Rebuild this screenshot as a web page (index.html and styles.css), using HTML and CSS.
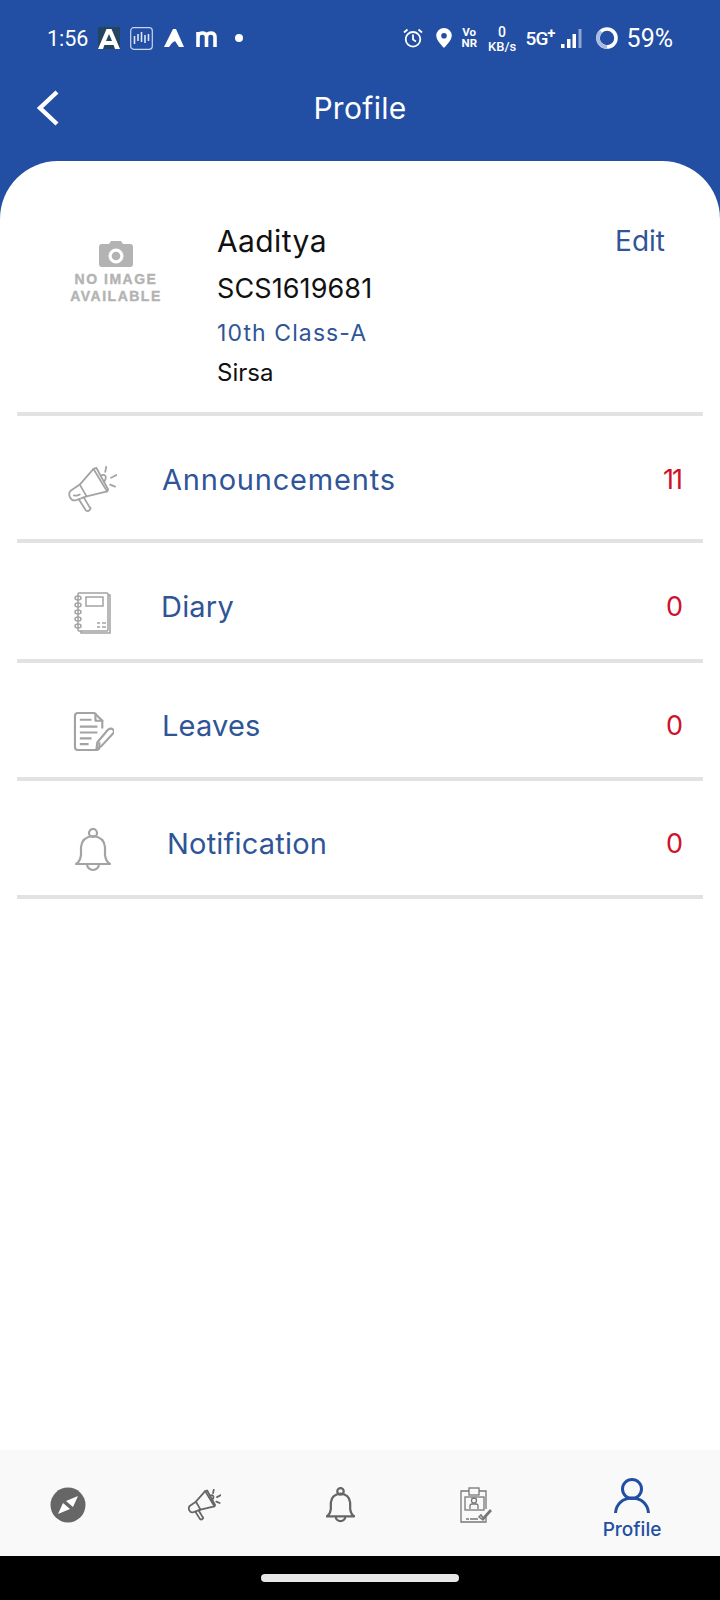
FILE: index.html
```html
<!DOCTYPE html>
<html lang="en">
<head>
  <meta charset="UTF-8" />
  <meta name="viewport" content="width=device-width, initial-scale=1" />
  <title>Profile</title>
  <link rel="stylesheet" href="styles.css">
</head>
<body>

<div class="app">
  <div class="status">
    <div class="status-left">
      <span class="time">1:56</span>
      <svg class="ico-a" width="22" height="22" viewBox="0 0 22 22"><rect width="22" height="22" fill="#23455f"/><path d="M0 22 8.500 2h5L22 22h-5l-1.400-4H6.400L5 22zM8 14h6l-3-7z" fill="#fff"/></svg>
      <svg class="ico-chart" width="23" height="23" viewBox="0 0 23 23" fill="none" stroke="#fff"><rect x=".7" y=".7" width="21.600" height="21.600" rx="3" stroke="#c9d6ee" stroke-width="1.200"/><path d="M4.500 9v8M8 7v7M11.500 5v10M15 8v8M18.500 7v7" stroke-width="1.600" stroke="#dce5f5"/></svg>
      <svg class="ico-tri" width="20" height="18" viewBox="0 0 20 18"><path d="M9 0h3l8 18h-5l-4-6-3 2-3 4H0z" fill="#fff"/></svg>
      <svg class="ico-m" width="21" height="17" viewBox="0 0 21 17" fill="none" stroke="#fff" stroke-width="3.600"><path d="M2 17V2M2 7q0-4 4-4 4.500 0 4.500 4v10M10.500 7q0-4 4-4 4.500 0 4.500 4v10"/></svg>
      <span class="dot"></span>
    </div>
    <div class="status-right">
      <svg class="ico-alarm" width="20" height="20" viewBox="0 0 20 20" fill="none" stroke="#fff" stroke-width="1.800"><circle cx="10" cy="11.300" r="7.300"/><path d="M10 6.500v5l3 2M1 4.500 4.500 1.500M19 4.500 15.500 1.500"/></svg>
      <svg class="ico-pin" width="16" height="20" viewBox="0 0 16 20"><path fill-rule="evenodd" d="M8 0a7.800 7.800 0 0 1 7.800 7.800C15.800 12.500 8 20 8 20S.2 12.500.2 7.800A7.800 7.800 0 0 1 8 0zm0 5a2.800 2.800 0 1 0 0 5.600A2.800 2.800 0 0 0 8 5z" fill="#fff"/></svg>
      <span class="vonr">Vo<br>NR</span>
      <span class="speed">0<br><small>KB/s</small></span>
      <span class="net">5G<sup>+</sup></span>
      <svg class="ico-signal" width="21" height="19" viewBox="0 0 21 19"><rect x="0" y="15" width="3.500" height="4" fill="#fff"/><rect x="6" y="10" width="3.500" height="9" fill="#fff"/><rect x="11.500" y="5" width="3.500" height="14" fill="#fff"/><rect x="17.500" y="0" width="3" height="19" fill="#8ea6d4"/></svg>
      <svg class="ico-ring" width="22" height="22" viewBox="0 0 22 22" fill="none" stroke-width="3.600"><circle cx="11" cy="11" r="9" stroke="#fff"/><path d="M11 20A9 9 0 0 1 5 4.300" stroke="#a9bbe0"/></svg>
      <span class="pct">59%</span>
    </div>
  </div>

  <div class="titlebar">
    <svg class="back" width="26" height="38" viewBox="0 0 26 38" fill="none" stroke="#fff" stroke-width="4.400"><path d="M22 3 5 19l17 16"/></svg>
    <h1>Profile</h1>
  </div>

  <div class="card">
    <div class="profile">
      <div class="noimage">
        <svg width="34" height="26" viewBox="0 0 34 26"><path fill-rule="evenodd" d="M3 3h7l2-3h10l2 3h7q3 0 3 3v17q0 3-3 3H3q-3 0-3-3V6q0-3 3-3zm14 4.500a7.500 7.500 0 1 0 0 15 7.500 7.500 0 0 0 0-15zm0 3.200a4.300 4.300 0 1 1 0 8.600 4.300 4.300 0 0 1 0-8.600z" fill="#b3b3b3"/></svg>
        <span>NO IMAGE<br>AVAILABLE</span>
      </div>
      <div class="info">
        <div class="name">Aaditya</div>
        <div class="code">SCS1619681</div>
        <div class="klass">10th Class-A</div>
        <div class="city">Sirsa</div>
      </div>
      <a class="edit">Edit</a>
    </div>

    <div class="row row-ann">
      <svg class="row-ico" width="49" height="47" viewBox="0 0 50 48" fill="none" stroke="#a3a3a3" stroke-width="1.800" stroke-linejoin="round" stroke-linecap="round">
        <path d="M12 19 26 3l14 23-21 5z"/><path d="M26 3l3-1 12 22-1 2"/><path d="M33.500 10q3-2 4.500 0t-1 6"/>
        <path d="M12 19 3 25q-3 3-1 7t6 3l11-4"/><path d="M6 30q3 1 6-1"/><path d="M11 34l7 11q2 2 4 0t0-3l-6-10"/>
        <path d="M38 6l1-5M44 12l6-3M43 19l5 2"/>
      </svg>
      <span class="label">Announcements</span>
      <span class="count">11</span>
    </div>
    <div class="row row-diary">
      <svg class="row-ico" width="38" height="42" viewBox="0 0 38 42" fill="none" stroke="#a3a3a3" stroke-width="1.500">
        <rect x="4" y="1" width="30" height="38" rx="1"/><path d="M34 3h2v38H7v-2"/><rect x="12" y="5" width="17" height="9"/>
        <ellipse cx="4" cy="6" rx="3" ry="2"/><ellipse cx="4" cy="13" rx="3" ry="2"/><ellipse cx="4" cy="20" rx="3" ry="2"/><ellipse cx="4" cy="27" rx="3" ry="2"/><ellipse cx="4" cy="34" rx="3" ry="2"/>
        <path d="M23 31h3M28 31h4M23 35h3M28 35h4"/>
      </svg>
      <span class="label">Diary</span>
      <span class="count">0</span>
    </div>
    <div class="row row-leave">
      <svg class="row-ico" width="41" height="41" viewBox="0 0 42 42" fill="none" stroke="#a3a3a3" stroke-width="2.200" stroke-linejoin="round">
        <path d="M27 32v5q0 3-3 3H5q-3 0-3-3V5q0-3 3-3h17l8 8v8"/><path d="M23 2v8h8"/>
        <path d="M7 9h12M7 16h18M7 22h18M7 28h12M7 34h9"/>
        <path d="M24 39l1-7 11-13q3-2 5 0t0 4L29 36z"/>
      </svg>
      <span class="label">Leaves</span>
      <span class="count">0</span>
    </div>
    <div class="row row-note">
      <svg class="row-ico" width="36" height="44" viewBox="0 0 36 44" fill="none" stroke="#a3a3a3" stroke-width="2.200" stroke-linejoin="round">
        <circle cx="18" cy="5" r="4"/><path d="M1 36q4-2 5-9v-8Q7 9 18 8q11 1 12 11v8q1 7 5 9z"/><path d="M12 36a6 6 0 0 0 12 0"/>
      </svg>
      <span class="label label-note">Notification</span>
      <span class="count">0</span>
    </div>
  </div>

  <div class="tabs">
    <div class="tab">
      <svg width="36" height="36" viewBox="0 0 36 36"><circle cx="18" cy="18" r="17.500" fill="#666"/><path d="M28 9 23 20l-7-6zM8 27l5-11 7 6z" fill="#fff"/></svg>
    </div>
    <div class="tab">
      <svg width="33" height="32" viewBox="0 0 50 48" fill="none" stroke="#666" stroke-width="2.700" stroke-linejoin="round" stroke-linecap="round">
        <path d="M12 19 26 3l14 23-21 5z"/><path d="M26 3l3-1 12 22-1 2"/><path d="M33.500 10q3-2 4.500 0t-1 6"/>
        <path d="M12 19 3 25q-3 3-1 7t6 3l11-4"/><path d="M11 34l7 11q2 2 4 0t0-3l-6-10"/>
        <path d="M38 6l1-5M44 12l6-3M43 19l5 2"/>
      </svg>
    </div>
    <div class="tab">
      <svg width="29" height="36" viewBox="0 0 36 44" fill="none" stroke="#666" stroke-width="2.800" stroke-linejoin="round">
        <circle cx="18" cy="5" r="4"/><path d="M1 36q4-2 5-9v-8Q7 9 18 8q11 1 12 11v8q1 7 5 9z"/><path d="M12 36a6 6 0 0 0 12 0"/>
      </svg>
    </div>
    <div class="tab">
      <svg width="32" height="36" viewBox="0 0 32 36" fill="none" stroke="#777" stroke-width="1.300">
        <path d="M9 4H1v31h25v-5M19 4h7v18"/><rect x="9" y="1" width="10" height="7"/><rect x="5" y="10" width="19" height="13"/>
        <circle cx="14" cy="13.500" r="2.500"/><path d="M10 22v-3q0-2 2-2h4q2 0 2 2v3"/><path d="M6 32h3M10 32h8" stroke-width="1.600"/>
        <path d="M21 28l2 3 7-8 1 1-8 9-4-3z" stroke-width="1.500"/>
      </svg>
    </div>
    <div class="tab tab-active">
      <svg width="36" height="36" viewBox="0 0 36 36" fill="none" stroke="#224ea3" stroke-width="3"><circle cx="18" cy="11" r="9.500"/><path d="M1.500 35C2 26 9 20 18 20s16 6 16.500 15"/></svg>
      <span>Profile</span>
    </div>
  </div>

  <div class="navbar"><span class="pill"></span></div>
</div>

</body>
</html>
```

FILE: styles.css
```css
* {
  box-sizing: border-box;
}

body {
  margin: 0;
  font-family: Inter, "Open Sans", sans-serif;
  background: #fff;
}

.app {
  width: 720px;
  height: 1600px;
  display: flex;
  flex-direction: column;
  background: #224ea3;
  overflow: hidden;
}

/* status bar */
.status {
  height: 76px;
  display: flex;
  justify-content: space-between;
  align-items: center;
  padding: 0 47px;
  color: #fff;
  font-family: Roboto, sans-serif;
}

.status-left, .status-right {
  display: flex;
  align-items: center;
}

.time {
  font-size: 21.500px;
  width: 51px;
}

.ico-chart { margin-left: 10px; }
.ico-tri { margin-left: 11px; }
.ico-m { margin-left: 12px; }

.dot {
  width: 8px;
  height: 8px;
  margin-left: 18px;
  border-radius: 50%;
  background: #fff;
}

.ico-pin { margin-left: 13px; }

.vonr {
  width: 15px;
  margin-left: 10px;
  font-size: 11.500px;
  line-height: 11px;
  font-weight: 700;
  text-align: center;
}

.speed {
  width: 29px;
  margin-left: 11px;
  font-size: 14px;
  line-height: 14px;
  font-weight: 500;
  text-align: center;
  padding-top: 2px;
}

.speed small {
  font-size: 13px;
}

.net {
  margin-left: 9px;
  width: 28px;
  font-size: 19px;
  font-weight: 500;
  letter-spacing: -1px;
  white-space: nowrap;
}

.net sup {
  font-size: 15px;
  font-weight: 700;
  line-height: 0;
}

.ico-signal { margin-left: 7px; }
.ico-ring { margin-left: 14px; }

.pct {
  margin-left: 9px;
  font-size: 25px;
}

/* title */
.titlebar {
  height: 85px;
  display: flex;
  align-items: flex-start;
  justify-content: center;
  padding-top: 13px;
  position: relative;
}

.titlebar h1 {
  margin: 0;
  color: #fff;
  font-size: 30px;
  font-weight: 400;
  line-height: 38px;
  letter-spacing: 0.3px;
}

.back {
  position: absolute;
  left: 35px;
  top: 13px;
}

/* card */
.card {
  flex: 1;
  background: #fff;
  border-radius: 58px 58px 0 0;
  padding: 0 17px;
}

.profile {
  height: 255px;
  display: flex;
  border-bottom: 4px solid #e2e2e2;
  padding-top: 59px;
}

.noimage {
  width: 199px;
  padding-right: 1px;
  padding-top: 21px;
  text-align: center;
  color: #b3b3b3;
  font-family: "Liberation Sans", sans-serif;
  font-weight: 700;
  font-size: 14px;
  line-height: 17px;
  letter-spacing: 1.500px;
  -webkit-text-stroke: 0.4px #b3b3b3;
}

.noimage svg {
  display: block;
  margin: 0 auto 4px;
}

.noimage span {
  display: block;
  white-space: nowrap;
}

.info {
  flex: 1;
  padding-left: 1px;
}

.name {
  font-size: 30px;
  line-height: 42px;
  letter-spacing: 0.4px;
  color: #111;
}

.code {
  font-size: 27px;
  line-height: 44px;
  letter-spacing: 0.1px;
  margin-top: 5px;
  color: #111;
}

.klass {
  font-size: 23px;
  line-height: 36px;
  color: #2f5597;
  letter-spacing: 1.100px;
  margin-top: 4px;
}

.city {
  font-size: 24px;
  line-height: 36px;
  color: #111;
  margin-top: 4px;
}

.edit {
  font-size: 28px;
  line-height: 42px;
  color: #2f5597;
  margin-right: 38px;
}

.row {
  display: flex;
  align-items: center;
  padding-top: 10px;
  border-bottom: 4px solid #e2e2e2;
}

.row-ann { height: 127px; padding-top: 4px; }
.row-diary { height: 120px; }
.row-leave { height: 118px; }
.row-note { height: 118px; }

.row-ico {
  margin-top: 13px;
}

.row-ann .row-ico { margin: 20px 45px 0 51px; }
.row-diary .row-ico { margin-left: 57px; margin-right: 49px; }
.row-leave .row-ico { margin-left: 56px; margin-right: 48px; }
.row-note .row-ico { margin-left: 58px; margin-right: 56px; }

.label {
  flex: 1;
  font-size: 29px;
  letter-spacing: 0.2px;
  color: #2f5597;
}

.row-ann .label {
  letter-spacing: 0.8px;
}

.count {
  font-size: 27px;
  color: #d0112b;
  margin-right: 20px;
}

.row-ann .count {
  letter-spacing: -2px;
  margin-right: 22px;
}

/* bottom tabs */
.tabs {
  height: 106px;
  display: grid;
  grid-template-columns: 136px 136px 136px 136px 176px;
  align-items: center;
  background: #f9f9f9;
  padding-top: 4px;
}

.tab {
  display: flex;
  flex-direction: column;
  align-items: center;
}

.tab-active {
  color: #224ea3;
  font-size: 19px;
  font-weight: 500;
  line-height: 24px;
  gap: 4px;
  margin-top: 10px;
}

.navbar {
  height: 44px;
  background: #000;
  display: flex;
  align-items: center;
  justify-content: center;
}

.pill {
  width: 198px;
  height: 8px;
  border-radius: 4px;
  background: #e8e8e8;
}
```
